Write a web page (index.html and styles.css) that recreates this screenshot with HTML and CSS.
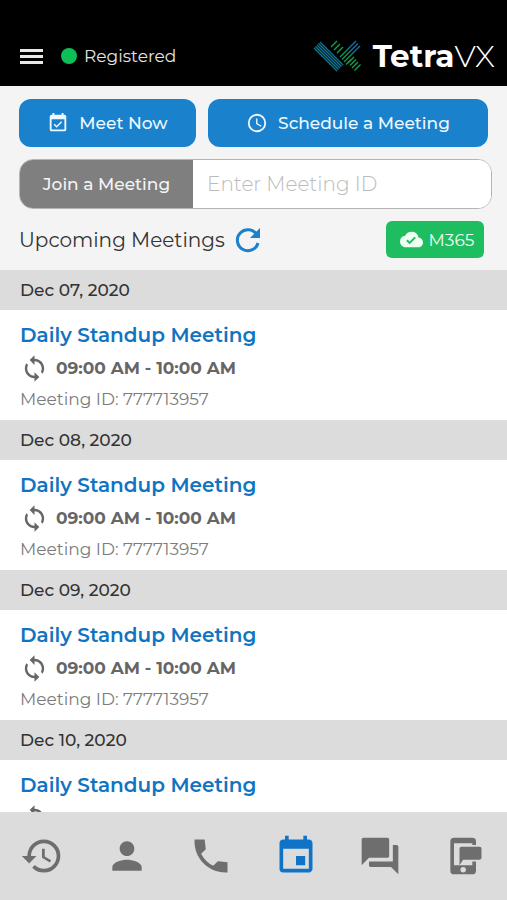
FILE: index.html
```html
<!DOCTYPE html>
<html lang="en">
<head>
<meta charset="utf-8">
<meta name="viewport" content="width=device-width, initial-scale=1">
<title>TetraVX Meetings</title>
<link rel="stylesheet" href="styles.css">
</head>
<body>
<svg class="symbols" aria-hidden="true">
  <symbol id="sync" viewBox="0 0 24 24"><path d="M12 4V1L8 5l4 4V6c3.310 0 6 2.690 6 6 0 1.010-.25 1.970-.7 2.800l1.460 1.460A7.930 7.930 0 0 0 20 12c0-4.420-3.580-8-8-8zm0 14c-3.310 0-6-2.690-6-6 0-1.010.25-1.970.7-2.800L5.240 7.740A7.930 7.930 0 0 0 4 12c0 4.420 3.580 8 8 8v3l4-4-4-4v3z"/></symbol>
</svg>
<header class="topbar">
  <button class="menu" aria-label="Menu"><span></span><span></span><span></span></button>
  <span class="dot"></span>
  <span class="status">Registered</span>
  <div class="brand">
    <svg class="mark" viewBox="0 0 49 32" aria-hidden="true">
      <defs>
        <linearGradient id="arm" gradientUnits="userSpaceOnUse" x1="27" y1="22" x2="45" y2="4"><stop offset=".35" stop-color="#12964c"/><stop offset=".75" stop-color="#1470a8"/></linearGradient>
      </defs>
      <g fill="none" stroke-width="1.400">
        <path stroke="#146ca6" d="M1 8l23 23M4 5l23 23M7 2l23 23"/>
        <path stroke="#12807c" d="M2.500 6.500l23 23M5.500 3.500l23 23"/>
        <path stroke="#14a04b" d="M18 7l6-6M21 10l6-6M24 13l6-6M35 23l6-6M37 25.500l6-6M39 28l6-6M41.500 30.500l6-6"/>
        <path stroke="url(#arm)" d="M27 17l16-16M29 19.500l16-16M31 22l16-16M33 24.500l5-5"/>
      </g>
    </svg>
    <span class="brand-name">Tetra<span>VX</span></span>
  </div>
</header>
<section class="tools">
  <div class="actions">
    <button class="action meet"><svg viewBox="0 0 24 24"><path d="M16.500 11.100l-1.100-1.100-4.900 4.900-2.100-2.100-1.100 1.100 3.200 3.200zM19 3h-1V1h-2v2H8V1H6v2H5a2 2 0 0 0-2 2v14a2 2 0 0 0 2 2h14a2 2 0 0 0 2-2V5a2 2 0 0 0-2-2zm0 16H5V8h14z"/></svg>Meet Now</button>
    <button class="action schedule"><svg viewBox="0 0 24 24"><path d="M12 2a10 10 0 1 0 0 20 10 10 0 0 0 0-20zm0 18a8 8 0 1 1 0-16 8 8 0 0 1 0 16zm.5-13H11v6l5.200 3.200.8-1.300-4.500-2.700z"/></svg>Schedule a Meeting</button>
  </div>
  <form class="join">
    <button type="button">Join a Meeting</button>
    <input type="text" placeholder="Enter Meeting ID" aria-label="Meeting ID">
  </form>
  <div class="heading">
    <h1>Upcoming Meetings</h1>
    <button class="refresh" aria-label="Refresh"><svg viewBox="0 0 26 26"><path fill="none" stroke="currentColor" stroke-width="3" d="M22 8A10.500 10.500 0 1 0 23 16"/><path d="M25 1v10H15z"/></svg></button>
    <button class="m365"><svg viewBox="0 0 24 24"><path d="M19.350 10.040A7.490 7.490 0 0 0 12 4C9.110 4 6.600 5.640 5.350 8.040A5.994 5.994 0 0 0 0 14c0 3.310 2.690 6 6 6h13c2.760 0 5-2.240 5-5 0-2.640-2.050-4.780-4.650-4.960zM10 17l-3.500-3.500 1.410-1.410L10 14.170 15.180 9l1.410 1.410L10 17z"/></svg>M365</button>
  </div>
</section>
<main class="list">
  <section><h2>Dec 07, 2020</h2><article><h3>Daily Standup Meeting</h3><p class="time"><svg><use href="#sync"/></svg>09:00 AM - 10:00 AM</p><p class="id">Meeting ID: 777713957</p></article></section>
  <section><h2>Dec 08, 2020</h2><article><h3>Daily Standup Meeting</h3><p class="time"><svg><use href="#sync"/></svg>09:00 AM - 10:00 AM</p><p class="id">Meeting ID: 777713957</p></article></section>
  <section><h2>Dec 09, 2020</h2><article><h3>Daily Standup Meeting</h3><p class="time"><svg><use href="#sync"/></svg>09:00 AM - 10:00 AM</p><p class="id">Meeting ID: 777713957</p></article></section>
  <section><h2>Dec 10, 2020</h2><article><h3>Daily Standup Meeting</h3><p class="time"><svg><use href="#sync"/></svg>09:00 AM - 10:00 AM</p><p class="id">Meeting ID: 777713957</p></article></section>
</main>
<nav class="tabs" aria-label="Main">
  <a href="#history" aria-label="History"><svg viewBox="0 0 24 24"><path d="M13 3a9 9 0 0 0-9 9H1l3.890 3.890.07.14L9 12H6c0-3.870 3.130-7 7-7s7 3.130 7 7-3.130 7-7 7c-1.930 0-3.680-.79-4.940-2.060l-1.420 1.420A8.954 8.954 0 0 0 13 21a9 9 0 0 0 0-18zm-1 5v5l4.280 2.540.72-1.210-3.500-2.080V8H12z"/></svg></a>
  <a href="#contacts" aria-label="Contacts"><svg viewBox="0 0 24 24"><path d="M12 12c2.210 0 4-1.790 4-4s-1.790-4-4-4-4 1.790-4 4 1.790 4 4 4zm0 2c-2.670 0-8 1.340-8 4v2h16v-2c0-2.660-5.330-4-8-4z"/></svg></a>
  <a href="#calls" aria-label="Calls"><svg viewBox="0 0 24 24"><path d="M21 15.460l-5.270-.61-2.520 2.520a15.045 15.045 0 0 1-6.590-6.590l2.530-2.530L8.540 3H3.030C2.450 13.180 10.820 21.550 21 20.970v-5.510z"/></svg></a>
  <a class="current" href="#meetings" aria-label="Meetings"><svg viewBox="0 0 24 24"><path d="M17 12h-5v5h5v-5zM16 1v2H8V1H6v2H5c-1.110 0-1.990.9-1.990 2L3 19a2 2 0 0 0 2 2h14c1.100 0 2-.9 2-2V5c0-1.100-.9-2-2-2h-1V1h-2zm3 18H5V8h14v11z"/></svg></a>
  <a href="#chat" aria-label="Chat"><svg viewBox="0 0 24 24"><path d="M21 6h-2v9H6v2c0 .55.45 1 1 1h11l4 4V7c0-.55-.45-1-1-1zm-4 6V3c0-.55-.45-1-1-1H3c-.55 0-1 .45-1 1v14l4-4h10c.55 0 1-.45 1-1z"/></svg></a>
  <a href="#sms" aria-label="Text messages"><svg viewBox="0 0 24 24"><path fill-rule="evenodd" d="M6 2h10a2 2 0 0 1 2 2v2h-2V5H6v12h10v-2h2v5a2 2 0 0 1-2 2H6a2 2 0 0 1-2-2V4a2 2 0 0 1 2-2zm5 16a1 1 0 1 0 0 3 1 1 0 0 0 0-3z"/><path d="M10 7h10a1 1 0 0 1 1 1v5a1 1 0 0 1-1 1h-9l-2 3V8a1 1 0 0 1 1-1z"/></svg></a>
</nav>
</body>
</html>
```
FILE: styles.css
```css
* { box-sizing: border-box; }
body { margin: 0; height: 100vh; display: flex; flex-direction: column; overflow: hidden; background: #fff; color: #333; font-family: Montserrat, Inter, sans-serif; }
button, input { font: inherit; }
button { border: 0; padding: 0; cursor: pointer; background: none; color: inherit; }
svg { fill: currentColor; flex: none; }
h1, h2, h3, p { margin: 0; }
.symbols { position: absolute; width: 0; height: 0; }
.topbar { flex: none; height: 86px; padding: 26px 12px 0 20px; background: #000; color: #e4e4e4; display: flex; align-items: center; }
.menu { width: 23px; display: flex; flex-direction: column; gap: 3px; }
.menu span { height: 3px; background: #e8e8e8; }
.dot { width: 16px; height: 16px; border-radius: 50%; background: #0cbf57; margin: 0 7px 0 18px; }
.status { font-size: 17px; }
.brand { margin-left: auto; display: flex; align-items: center; gap: 11px; color: #fff; }
.mark { width: 49px; height: 32px; }
.brand-name { font-size: 31px; font-weight: 700; line-height: 32px; }
.brand-name span { font-weight: 300; }
.tools { flex: none; background: #f4f4f4; padding: 13px 15px 0 19px; }
.actions { display: flex; gap: 12px; margin-right: 4px; }
.action { height: 48px; border-radius: 12px; background: #1a82cd; color: #eef8ff; font-size: 17px; font-weight: 500; display: flex; align-items: center; justify-content: center; gap: 10px; }
.action svg { width: 22px; height: 22px; }
.meet { flex: 177; }
.schedule { flex: 280; }
.join { display: flex; margin-top: 12px; height: 50px; border: 1px solid #b5b5b5; border-radius: 14px; overflow: hidden; background: #fff; }
.join button { width: 173px; background: #7f7f7f; color: #f4f4f4; font-size: 17px; font-weight: 500; }
.join input { flex: 1; min-width: 0; border: 0; padding: 0 14px; font-size: 20px; font-weight: 300; background: #fff; outline: 0; }
.join input::placeholder { color: #bbb; opacity: 1; }
.heading { height: 61px; display: flex; align-items: center; padding-right: 8px; }
.heading h1 { font-size: 20px; font-weight: 400; }
.refresh { margin-left: 10px; color: #1a82cd; width: 26px; height: 26px; }
.refresh svg { width: 26px; height: 26px; display: block; }
.m365 { margin-left: auto; padding-left: 4px; width: 98px; height: 37px; border-radius: 6px; background: #1ebe60; color: #effff4; font-size: 17px; display: flex; align-items: center; justify-content: center; gap: 6px; }
.m365 svg { width: 23px; height: 23px; }
.list { flex: 1; min-height: 0; overflow-y: auto; scrollbar-width: none; }
.list h2 { background: #dcdcdc; height: 40px; line-height: 40px; padding-left: 20px; font-size: 17px; font-weight: 500; }
.list article { height: 110px; padding: 10px 20px 0; }
.list h3 { font-size: 20px; line-height: 30px; font-weight: 600; color: #0f74c2; }
.time { display: flex; align-items: center; gap: 7px; height: 36px; color: #666; font-size: 17px; font-weight: 700; }
.time svg { width: 29px; height: 29px; }
.id { color: #7c7c7c; font-size: 17px; line-height: 26px; }
.tabs { flex: none; height: 88px; background: #dcdcdc; display: grid; grid-template-columns: repeat(6, 1fr); }
.tabs a { display: flex; align-items: center; justify-content: center; color: #6e6e6e; }
.tabs svg { width: 44px; height: 44px; }
.tabs .current { color: #0f74c8; }
```
